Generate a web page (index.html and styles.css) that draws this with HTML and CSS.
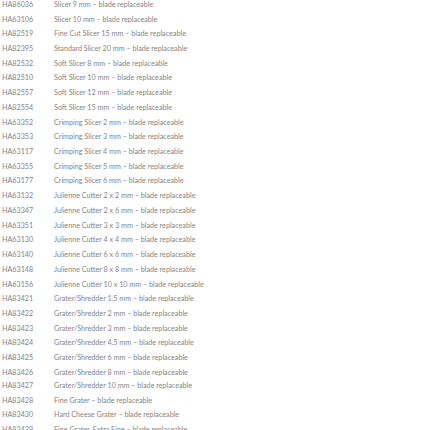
FILE: index.html
```html
<!DOCTYPE html>
<html lang="en">
<head>
    <meta charset="UTF-8">
    <title>Blade replaceable inserts</title>
    <link rel="stylesheet" href="styles.css">
</head>
<body>
    <div class="parts">
        <div class="row"><span class="code">HA86036</span><span class="desc">Slicer 9 mm – blade replaceable</span></div>
        <div class="row"><span class="code">HA63106</span><span class="desc">Slicer 10 mm – blade replaceable</span></div>
        <div class="row"><span class="code">HA82519</span><span class="desc">Fine Cut Slicer 15 mm – blade replaceable</span></div>
        <div class="row"><span class="code">HA82395</span><span class="desc">Standard Slicer 20 mm – blade replaceable</span></div>
        <div class="row"><span class="code">HA82532</span><span class="desc">Soft Slicer 8 mm – blade replaceable</span></div>
        <div class="row"><span class="code">HA82510</span><span class="desc">Soft Slicer 10 mm – blade replaceable</span></div>
        <div class="row"><span class="code">HA82557</span><span class="desc">Soft Slicer 12 mm – blade replaceable</span></div>
        <div class="row"><span class="code">HA82554</span><span class="desc">Soft Slicer 15 mm – blade replaceable</span></div>
        <div class="row"><span class="code">HA63352</span><span class="desc">Crimping Slicer 2 mm – blade replaceable</span></div>
        <div class="row"><span class="code">HA63353</span><span class="desc">Crimping Slicer 3 mm – blade replaceable</span></div>
        <div class="row"><span class="code">HA63117</span><span class="desc">Crimping Slicer 4 mm – blade replaceable</span></div>
        <div class="row"><span class="code">HA63355</span><span class="desc">Crimping Slicer 5 mm – blade replaceable</span></div>
        <div class="row"><span class="code">HA63177</span><span class="desc">Crimping Slicer 6 mm – blade replaceable</span></div>
        <div class="row"><span class="code">HA63132</span><span class="desc">Julienne Cutter 2 x 2 mm – blade replaceable</span></div>
        <div class="row"><span class="code">HA63347</span><span class="desc">Julienne Cutter 2 x 6 mm – blade replaceable</span></div>
        <div class="row"><span class="code">HA63351</span><span class="desc">Julienne Cutter 3 x 3 mm – blade replaceable</span></div>
        <div class="row"><span class="code">HA63130</span><span class="desc">Julienne Cutter 4 x 4 mm – blade replaceable</span></div>
        <div class="row"><span class="code">HA63140</span><span class="desc">Julienne Cutter 6 x 6 mm – blade replaceable</span></div>
        <div class="row"><span class="code">HA63148</span><span class="desc">Julienne Cutter 8 x 8 mm – blade replaceable</span></div>
        <div class="row"><span class="code">HA63156</span><span class="desc">Julienne Cutter 10 x 10 mm – blade replaceable</span></div>
        <div class="row"><span class="code">HA83421</span><span class="desc">Grater/Shredder 1.5 mm – blade replaceable</span></div>
        <div class="row"><span class="code">HA83422</span><span class="desc">Grater/Shredder 2 mm – blade replaceable</span></div>
        <div class="row"><span class="code">HA83423</span><span class="desc">Grater/Shredder 3 mm – blade replaceable</span></div>
        <div class="row"><span class="code">HA83424</span><span class="desc">Grater/Shredder 4.5 mm – blade replaceable</span></div>
        <div class="row"><span class="code">HA83425</span><span class="desc">Grater/Shredder 6 mm – blade replaceable</span></div>
        <div class="row"><span class="code">HA83426<br>HA83427</span><span class="desc">Grater/Shredder 8 mm – blade replaceable<br>Grater/Shredder 10 mm – blade replaceable</span></div>
        <div class="row"><span class="code">HA83428</span><span class="desc">Fine Grater – blade replaceable</span></div>
        <div class="row"><span class="code">HA83430</span><span class="desc">Hard Cheese Grater – blade replaceable</span></div>
        <div class="row"><span class="code">HA83429</span><span class="desc">Fine Grater, Extra Fine – blade replaceable</span></div>
    </div>
</body>
</html>
```

FILE: styles.css
```css
body {
    margin: 0;
    background: #fff;
    font-family: Lato, "Open Sans", sans-serif;
    font-size: 7.2px;
    color: #858585;
}
.parts {
    margin-top: -3px;
    padding-left: 2px;
}
.row {
    display: flex;
    line-height: 13px;
    padding: 0.86px 0;
}
.code {
    width: 52px;
    flex-shrink: 0;
}
.desc {
    flex: 1;
}
```
